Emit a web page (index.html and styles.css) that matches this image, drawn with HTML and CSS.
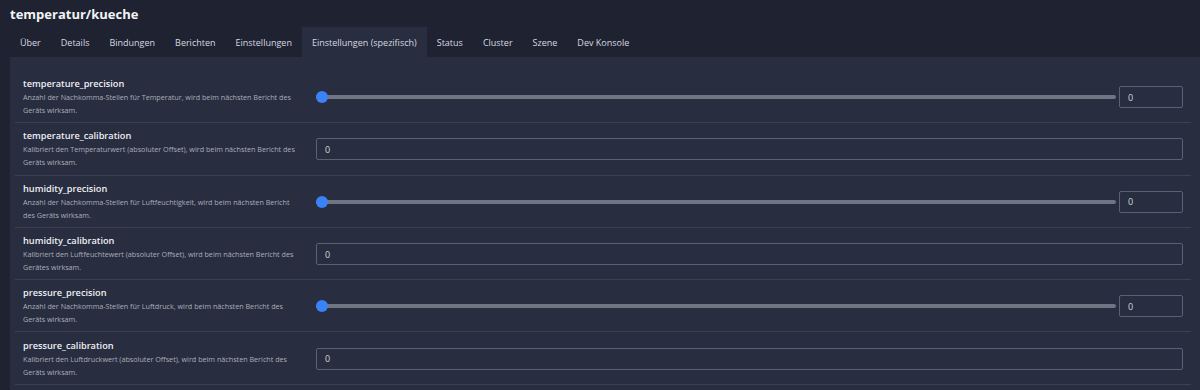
FILE: index.html
```html
<!DOCTYPE html>
<html lang="de">
<head>
  <meta charset="UTF-8" />
  <meta name="viewport" content="width=device-width, initial-scale=1.0"/>
  <title>temperatur/kueche</title>
  <link rel="stylesheet" href="styles.css">
</head>
<body>
  <header class="device-header">
    <h1>temperatur/kueche</h1>
    <nav class="tabs">
      <a class="tab" href="#">Über</a>
      <a class="tab" href="#">Details</a>
      <a class="tab" href="#">Bindungen</a>
      <a class="tab" href="#">Berichten</a>
      <a class="tab" href="#">Einstellungen</a>
      <a class="tab active" href="#">Einstellungen (spezifisch)</a>
      <a class="tab" href="#">Status</a>
      <a class="tab" href="#">Cluster</a>
      <a class="tab" href="#">Szene</a>
      <a class="tab" href="#">Dev Konsole</a>
    </nav>
  </header>

  <main class="panel">
    <div class="settings">

      <div class="setting">
        <div class="setting-info">
          <div class="setting-name">temperature_precision</div>
          <div class="setting-desc">Anzahl der Nachkomma-Stellen für Temperatur, wird beim nächsten Bericht des Geräts wirksam.</div>
        </div>
        <div class="setting-control slider">
          <input class="range" type="range" min="0" max="3" value="0">
          <input class="field" type="number" value="0">
        </div>
      </div>

      <div class="setting">
        <div class="setting-info">
          <div class="setting-name">temperature_calibration</div>
          <div class="setting-desc">Kalibriert den Temperaturwert (absoluter Offset), wird beim nächsten Bericht des Geräts wirksam.</div>
        </div>
        <div class="setting-control">
          <input class="field" type="number" value="0">
        </div>
      </div>

      <div class="setting">
        <div class="setting-info">
          <div class="setting-name">humidity_precision</div>
          <div class="setting-desc">Anzahl der Nachkomma-Stellen für Luftfeuchtigkeit, wird beim nächsten Bericht des Geräts wirksam.</div>
        </div>
        <div class="setting-control slider">
          <input class="range" type="range" min="0" max="3" value="0">
          <input class="field" type="number" value="0">
        </div>
      </div>

      <div class="setting">
        <div class="setting-info">
          <div class="setting-name">humidity_calibration</div>
          <div class="setting-desc">Kalibriert den Luftfeuchtewert (absoluter Offset), wird beim nächsten Bericht des Gerätes wirksam.</div>
        </div>
        <div class="setting-control">
          <input class="field" type="number" value="0">
        </div>
      </div>

      <div class="setting">
        <div class="setting-info">
          <div class="setting-name">pressure_precision</div>
          <div class="setting-desc">Anzahl der Nachkomma-Stellen für Luftdruck, wird beim nächsten Bericht des Geräts wirksam.</div>
        </div>
        <div class="setting-control slider">
          <input class="range" type="range" min="0" max="3" value="0">
          <input class="field" type="number" value="0">
        </div>
      </div>

      <div class="setting">
        <div class="setting-info">
          <div class="setting-name">pressure_calibration</div>
          <div class="setting-desc">Kalibriert den Luftdruckwert (absoluter Offset), wird beim nächsten Bericht des Geräts wirksam.</div>
        </div>
        <div class="setting-control">
          <input class="field" type="number" value="0">
        </div>
      </div>

    </div>
  </main>
</body>
</html>
```

FILE: styles.css
```css
body {
  font-family: 'Open Sans', 'Noto Sans', sans-serif;
  background: #1f2331;
  color: #e4e7ec;
  margin: 0;
  overflow: hidden;
}

.device-header {
  padding: 0 0 0 10px;
}

.device-header h1 {
  font-size: 13px;
  font-weight: 700;
  margin: 0;
  height: 27px;
  line-height: 28px;
  color: #f2f4f7;
}

.tabs {
  display: flex;
  height: 30px;
}

.tab {
  display: flex;
  align-items: center;
  padding: 0 10px;
  font-size: 9px;
  color: #d6d9e0;
  text-decoration: none;
}

.tab.active {
  background: #282d3f;
}

.panel {
  background: #282d3f;
  margin-left: 10px;
  padding: 14px 9px 0 5px;
  height: 400px;
}

.setting {
  display: grid;
  grid-template-columns: 280px 1fr;
  column-gap: 13px;
  align-items: center;
  padding: 6px 8px 5px;
  border-bottom: 1px solid #3b4152;
  height: 40.3px;
}

.setting-name {
  font-size: 9.2px;
  font-weight: 600;
  line-height: 14px;
  color: #eef0f4;
}

.setting-desc {
  font-size: 7.2px;
  line-height: 13px;
  color: #a9afba;
}

.setting-control {
  display: grid;
  grid-template-columns: 1fr;
  align-items: center;
}

.setting-control.slider {
  grid-template-columns: 1fr 64px;
  column-gap: 3px;
}

.field {
  box-sizing: border-box;
  width: 100%;
  height: 22px;
  margin: 0;
  background: transparent;
  border: 1px solid #5a6174;
  border-radius: 2px;
  color: #d4d8df;
  font-family: inherit;
  font-size: 9px;
  padding: 0 8px;
}

.field::-webkit-inner-spin-button,
.field::-webkit-outer-spin-button {
  -webkit-appearance: none;
  margin: 0;
}

.range {
  width: 100%;
  -webkit-appearance: none;
  appearance: none;
  height: 4px;
  margin: 0;
  background: #6f7583;
  border-radius: 2px;
}

.range::-webkit-slider-thumb {
  -webkit-appearance: none;
  width: 12px;
  height: 12px;
  border-radius: 50%;
  background: #3b82f6;
  border: none;
}
```
